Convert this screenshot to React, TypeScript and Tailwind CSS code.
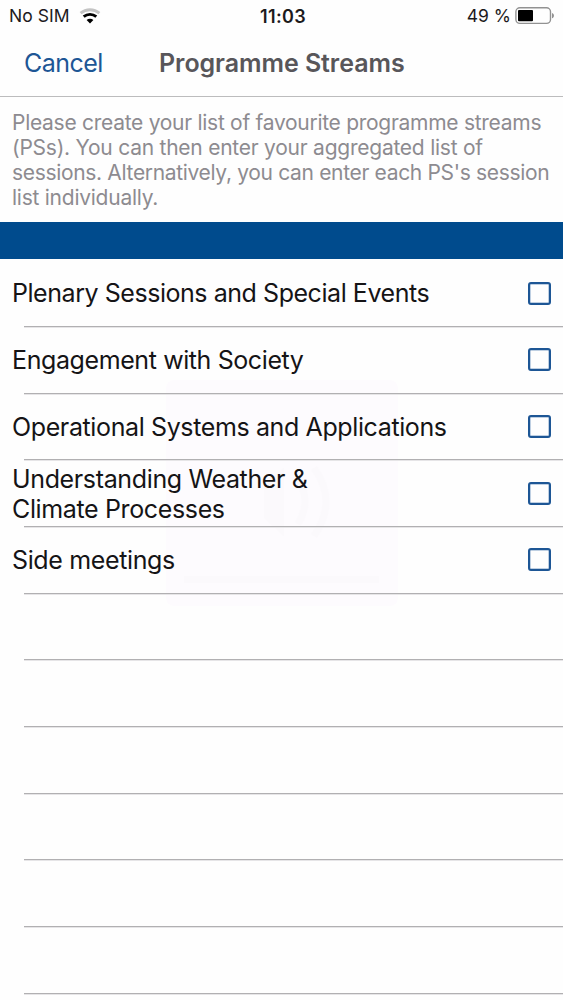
import { useState } from "react"

const streams = [
  { id: 1, lines: ["Plenary Sessions and Special Events"], spacing: "tracking-[-0.45px]" },
  { id: 2, lines: ["Engagement with Society"], spacing: "tracking-[-0.4px]" },
  { id: 3, lines: ["Operational Systems and Applications"], spacing: "tracking-[-0.38px]" },
  { id: 4, lines: ["Understanding Weather &", "Climate Processes"], spacing: "pt-px tracking-[-0.36px]" },
  { id: 5, lines: ["Side meetings"], spacing: "tracking-[-0.36px]" },
]

const emptyRows = [1, 2, 3, 4, 5, 6]

const intro = [
  { text: "Please create your list of favourite programme streams", spacing: "tracking-[-0.28px]" },
  { text: "(PSs). You can then enter your aggregated list of", spacing: "tracking-[-0.24px]" },
  { text: "sessions. Alternatively, you can enter each PS's session", spacing: "tracking-[-0.33px]" },
  { text: "list individually.", spacing: "tracking-[-0.25px]" },
]

function WifiIcon() {
  return (
    <svg className="ml-[9px] h-[17px] w-[22px]" viewBox="0 0 22 17" fill="none">
      <path d="M1.6 5.2C7 .6 15 .6 20.4 5.2" stroke="#c4c4c4" strokeWidth="2.9" />
      <path d="M4.7 8.7C8.4 5.6 13.6 5.6 17.3 8.7" stroke="#000" strokeWidth="2.9" />
      <path d="M11 15.5L7.6 12C9.5 10.4 12.5 10.4 14.4 12Z" fill="#000" />
    </svg>
  )
}

function BatteryIcon() {
  return (
    <svg className="ml-[4px] h-[18px] w-[40px]" viewBox="0 0 40 18" fill="none">
      <rect x="0.9" y="0.8" width="34.6" height="15.6" rx="4" stroke="#929292" strokeWidth="1.4" />
      <rect x="3" y="3" width="15" height="11.2" rx="1" fill="#000" />
      <path d="M37 5.9C39.6 6.8 39.6 10.4 37 11.3Z" fill="#929292" />
    </svg>
  )
}

// Faded volume indicator behind the list
function VolumeHud() {
  return (
    <div className="absolute top-[380px] left-[166px] h-[226px] w-[232px] rounded-lg bg-[#fdfbfe]">
      <svg className="h-full w-full" viewBox="0 0 232 226" fill="none">
        <path d="M98 104L118 88V156L98 138Z" fill="#fbf9fc" />
        <path d="M132 99Q146 121 132 144M148 88Q172 121 148 156" stroke="#fbf9fc" strokeWidth="7" />
        <rect x="18" y="196" width="195" height="7" fill="#fbf9fc" />
      </svg>
    </div>
  )
}

function App() {
  const [selected, setSelected] = useState<number[]>([])

  const toggle = (id: number) => {
    setSelected(selected.includes(id) ? selected.filter((s) => s !== id) : [...selected, id])
  }

  return (
    <div className="relative h-[1000px] w-[563px] overflow-hidden bg-[#fefefe] font-['Inter',sans-serif]">
      <VolumeHud />

      <div className="relative">
        {/* Status bar */}
        <div className="grid h-[31px] grid-cols-3 items-center pt-px text-[17.5px] text-[#1c1a1c]">
          <div className="flex items-center pl-[9px]">
            <span className="tracking-[0.05px]">No SIM</span>
            <WifiIcon />
          </div>
          <div className="pl-[3px] text-center text-[18px] font-semibold tracking-[0.3px]">11:03</div>
          <div className="flex items-center justify-end pr-[8px]">
            <span>49 %</span>
            <BatteryIcon />
          </div>
        </div>

        {/* Title bar */}
        <div className="flex h-[66px] items-center border-b border-[#bcbcbd] pl-[24px]">
          <button className="w-[135px] text-left text-[25px] tracking-[-0.55px] text-[#1d5695]">Cancel</button>
          <h1 className="text-[25px] font-semibold tracking-[-0.06px] whitespace-nowrap text-[#58565a]">
            Programme Streams
          </h1>
        </div>

        <div className="h-[125.4px] pt-[13px] pl-[12px] text-[21px] leading-[25px] whitespace-nowrap text-[#8d8b90]">
          {intro.map((line) => (
            <p key={line.text} className={line.spacing}>{line.text}</p>
          ))}
        </div>

        <div className="h-[37px] bg-[#004b8d]" />

        <ul className="pt-[0.9px]">
          {streams.map((s) => (
            <li key={s.id} className="relative flex h-[66.7px] items-center justify-between pr-[12px] pb-px pl-[12px]">
              <div className={`text-[25px] leading-[30px] whitespace-nowrap text-[#151416] ${s.spacing}`}>
                {s.lines.map((line) => (
                  <p key={line}>{line}</p>
                ))}
              </div>
              <button
                onClick={() => toggle(s.id)}
                className={`size-[23px] rounded-[3px] border-2 border-[#1d5695] shadow-[inset_0_0_0_0.5px_#7fa0c6] ${selected.includes(s.id) ? "bg-[#1d5695]" : ""}`}
              />
              <span className="absolute right-0 bottom-0 left-[24px] h-px bg-[#b1b0b2] shadow-[0_1px_0_#e6e5e7]" />
            </li>
          ))}
          {emptyRows.map((row) => (
            <li key={row} className="ml-[24px] flex h-[66.7px] items-end">
              <span className="h-px w-full bg-[#b1b0b2] shadow-[0_1px_0_#e6e5e7]" />
            </li>
          ))}
        </ul>
      </div>
    </div>
  )
}

export default App
